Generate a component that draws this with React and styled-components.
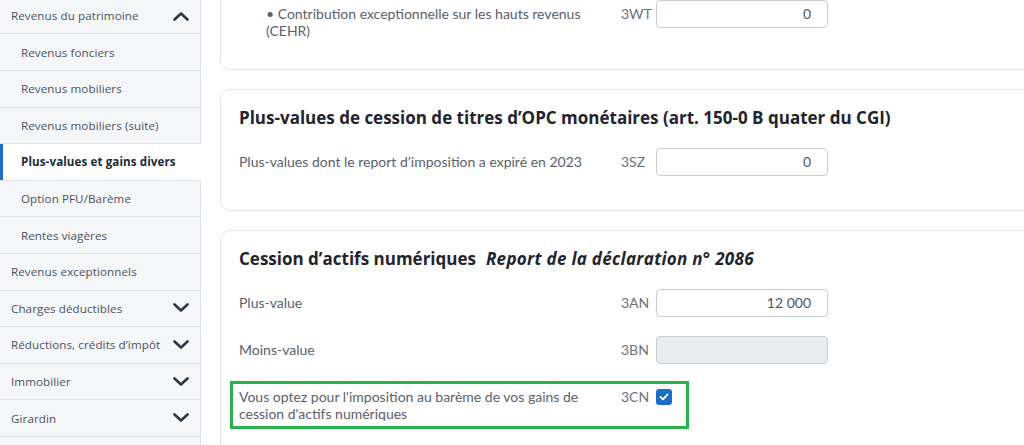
import React from 'react';
import styled, { createGlobalStyle } from 'styled-components';

const GlobalStyle = createGlobalStyle`
    html, body {
        margin: 0;
        padding: 0;
        background: #ffffff;
    }
    body {
        font-family: "Lato", "Liberation Sans", sans-serif;
        overflow: hidden;
    }
`

const Page = styled.div`
    display: flex;
    width: 1024px;
    height: 445px;
    overflow: hidden;
`

const Sidebar = styled.nav`
    width: 200px;
    flex-shrink: 0;
    background: #f5f6f8;
    border-right: 1px solid #dfe2e7;
    display: flex;
    flex-direction: column;
    margin-top: -2.2px;
`

const NavItem = styled.div`
    display: flex;
    align-items: center;
    justify-content: space-between;
    height: 36.6px;
    flex-shrink: 0;
    box-sizing: border-box;
    border-bottom: 1px solid #e3e6ea;
    padding: 0 10px 0 ${p => (p.$sub ? '21px' : '11px')};
    font-family: "Open Sans", "Liberation Sans", sans-serif;
    font-size: 11.6px;
    letter-spacing: 0.1px;
    color: ${p => (p.$active ? '#222a36' : '#4a5262')};
    font-weight: ${p => (p.$active ? 700 : 400)};
    background: ${p => (p.$active ? '#ffffff' : 'transparent')};
    box-shadow: ${p => (p.$active ? 'inset 3px 0 0 #1b6ec2' : 'none')};
    margin-right: ${p => (p.$active ? '-1px' : '0')};
`

const Chevron = ({ up }) => (
    <svg width="18" height="10" viewBox="0 0 18 10">
        <polyline
            points={up ? '2.5,8.5 9,2.5 15.5,8.5' : '2.5,1.5 9,7.5 15.5,1.5'}
            fill="none"
            stroke="#2b3848"
            strokeWidth="2.6"
            strokeLinecap="round"
            strokeLinejoin="round"
        />
    </svg>
)

const Main = styled.main`
    flex: 1;
    padding-left: 19px;
    display: flex;
    flex-direction: column;
    gap: 19px;
    margin-top: -17px;
`

const Card = styled.section`
    width: calc(100% + 14px);
    box-sizing: border-box;
    border: 1px solid #e1e4e8;
    border-radius: 10px;
    background: #ffffff;
    padding: 16px 18px ${p => p.$padBottom || '15px'};
    flex-shrink: 0;
`

const Heading = styled.h2`
    margin: 0 0 18px;
    font-family: "Open Sans", "Liberation Sans", sans-serif;
    font-size: 17px;
    line-height: 24px;
    font-weight: 700;
    color: #1f2430;
`

const Sub = styled.em`
    font-style: italic;
    margin-left: 10px;
    letter-spacing: 0.3px;
`

const Row = styled.div`
    position: relative;
    display: grid;
    grid-template-columns: ${p => (p.$indent ? '355px' : '382px')} 35px 172px;
    padding-left: ${p => (p.$indent ? '27px' : '0')};
    align-items: start;
    margin-bottom: 19px;
    &::after {
        content: '';
        display: ${p => (p.$highlight ? 'block' : 'none')};
        position: absolute;
        left: -9px;
        top: -2px;
        bottom: -7px;
        width: 459px;
        box-sizing: border-box;
        border: 3px solid #2bb04b;
    }
`

const Label = styled.div`
    padding-top: 5px;
    font-size: 14px;
    line-height: 17px;
    color: #59616d;
`

const Code = styled.div`
    font-size: 14px;
    line-height: 28px;
    color: #6b7280;
`

const Input = styled.div`
    height: 28px;
    box-sizing: border-box;
    border: 1px solid #c9ced5;
    border-radius: 4px;
    background: ${p => (p.$disabled ? '#e9ecef' : '#ffffff')};
    padding-right: 16px;
    text-align: right;
    font-size: 14px;
    line-height: 26px;
    color: #4b5563;
`

const CheckCell = styled.div`
    height: 28px;
    display: flex;
    align-items: center;
`

const Checkbox = styled.span`
    width: 16px;
    height: 16px;
    border-radius: 3px;
    background: #1b6ec2;
    display: flex;
    align-items: center;
    justify-content: center;
`

const navItems = [
    { label: 'Revenus du patrimoine', chevron: 'up' },
    { label: 'Revenus fonciers', sub: true },
    { label: 'Revenus mobiliers', sub: true },
    { label: 'Revenus mobiliers (suite)', sub: true },
    { label: 'Plus-values et gains divers', sub: true, active: true },
    { label: 'Option PFU/Barème', sub: true },
    { label: 'Rentes viagères', sub: true },
    { label: 'Revenus exceptionnels' },
    { label: 'Charges déductibles', chevron: 'down' },
    { label: 'Réductions, crédits d’impôt', chevron: 'down' },
    { label: 'Immobilier', chevron: 'down' },
    { label: 'Girardin', chevron: 'down' },
    { label: '' },
]

export default function App() {
    return (
        <>
            <GlobalStyle />
            <Page>
                <Sidebar>
                    {navItems.map((item, i) => (
                        <NavItem key={i} $sub={item.sub} $active={item.active}>
                            <span>{item.label}</span>
                            {item.chevron && <Chevron up={item.chevron === 'up'} />}
                        </NavItem>
                    ))}
                </Sidebar>
                <Main>
                    <Card $padBottom="11px">
                        <Row $indent>
                            <Label>• Contribution exceptionnelle sur les hauts revenus (CEHR)</Label>
                            <Code>3WT</Code>
                            <Input>0</Input>
                        </Row>
                    </Card>
                    <Card>
                        <Heading>Plus-values de cession de titres d’OPC monétaires (art. 150-0 B quater du CGI)</Heading>
                        <Row>
                            <Label>Plus-values dont le report d’imposition a expiré en 2023</Label>
                            <Code>3SZ</Code>
                            <Input>0</Input>
                        </Row>
                    </Card>
                    <Card>
                        <Heading>
                            Cession d’actifs numériques<Sub>Report de la déclaration n° 2086</Sub>
                        </Heading>
                        <Row>
                            <Label>Plus-value</Label>
                            <Code>3AN</Code>
                            <Input>12 000</Input>
                        </Row>
                        <Row>
                            <Label>Moins-value</Label>
                            <Code>3BN</Code>
                            <Input $disabled />
                        </Row>
                        <Row $highlight>
                            <Label>Vous optez pour l'imposition au barème de vos gains de cession d'actifs numériques</Label>
                            <Code>3CN</Code>
                            <CheckCell>
                                <Checkbox>
                                    <svg width="10" height="8" viewBox="0 0 10 8">
                                        <polyline points="1.5,4 4,6.3 8.5,1.5" fill="none" stroke="#fff" strokeWidth="1.8" strokeLinecap="round" strokeLinejoin="round" />
                                    </svg>
                                </Checkbox>
                            </CheckCell>
                        </Row>
                    </Card>
                </Main>
            </Page>
        </>
    )
}
